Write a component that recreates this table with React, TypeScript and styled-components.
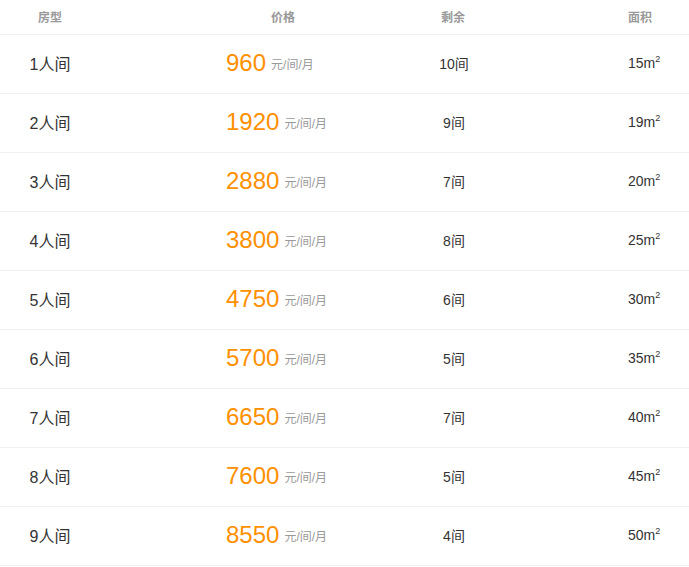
import styled, { createGlobalStyle } from "styled-components";

const GlobalStyle = createGlobalStyle`
  body {
    margin: 0;
    background: #fff;
    font-family: "Liberation Sans", "Noto Sans CJK SC", sans-serif;
  }
`;

const Table = styled.div`
  width: 689px;
  display: flex;
  flex-direction: column;
`;

const Row = styled.div<{ $head?: boolean }>`
  display: grid;
  grid-template-columns: 166px 234px 104px 185px;
  align-items: center;
  box-sizing: border-box;
  height: ${(p) => (p.$head ? "35px" : "59px")};
  padding-bottom: 2px;
  border-bottom: 1px solid #f1f1f1;
  color: ${(p) => (p.$head ? "#999" : "#333")};
  font-size: ${(p) => (p.$head ? "12px" : "14px")};
  font-weight: ${(p) => (p.$head ? "bold" : "normal")};
`;

const Cell = styled.div<{ $align?: string; $padL?: number; $padR?: number }>`
  text-align: ${(p) => p.$align || "center"};
  padding-left: ${(p) => p.$padL || 0}px;
  padding-right: ${(p) => p.$padR || 0}px;
  white-space: nowrap;
`;

const RoomName = styled(Cell)`
  font-size: 16px;
  color: #333;
`;

const Price = styled.span`
  font-size: 24px;
  color: #ff9000;
  vertical-align: middle;
`;

const Unit = styled.span`
  font-size: 12px;
  color: #999;
  margin-left: 5px;
  vertical-align: middle;
`;

const Sup = styled.sup`
  font-size: 9px;
  vertical-align: 6px;
  line-height: 0;
`;

const rooms = [
  { n: 1, price: 960, left: 10, area: 15 },
  { n: 2, price: 1920, left: 9, area: 19 },
  { n: 3, price: 2880, left: 7, area: 20 },
  { n: 4, price: 3800, left: 8, area: 25 },
  { n: 5, price: 4750, left: 6, area: 30 },
  { n: 6, price: 5700, left: 5, area: 35 },
  { n: 7, price: 6650, left: 7, area: 40 },
  { n: 8, price: 7600, left: 5, area: 45 },
  { n: 9, price: 8550, left: 4, area: 50 },
];

export default function App() {
  return (
    <>
      <GlobalStyle />
      <Table>
        <Row $head>
          <Cell $padR={66}>房型</Cell>
          <Cell>价格</Cell>
          <Cell $padL={2}>剩余</Cell>
          <Cell $align="left" $padL={124}>面积</Cell>
        </Row>
        {rooms.map((r) => (
          <Row key={r.n}>
            <RoomName $padR={66}>{r.n}人间</RoomName>
            <Cell $align="left" $padL={60}>
              <Price>{r.price}</Price>
              <Unit>元/间/月</Unit>
            </Cell>
            <Cell $padL={4}>{r.left}间</Cell>
            <Cell $align="left" $padL={124}>
              {r.area}m<Sup>2</Sup>
            </Cell>
          </Row>
        ))}
      </Table>
    </>
  );
}
